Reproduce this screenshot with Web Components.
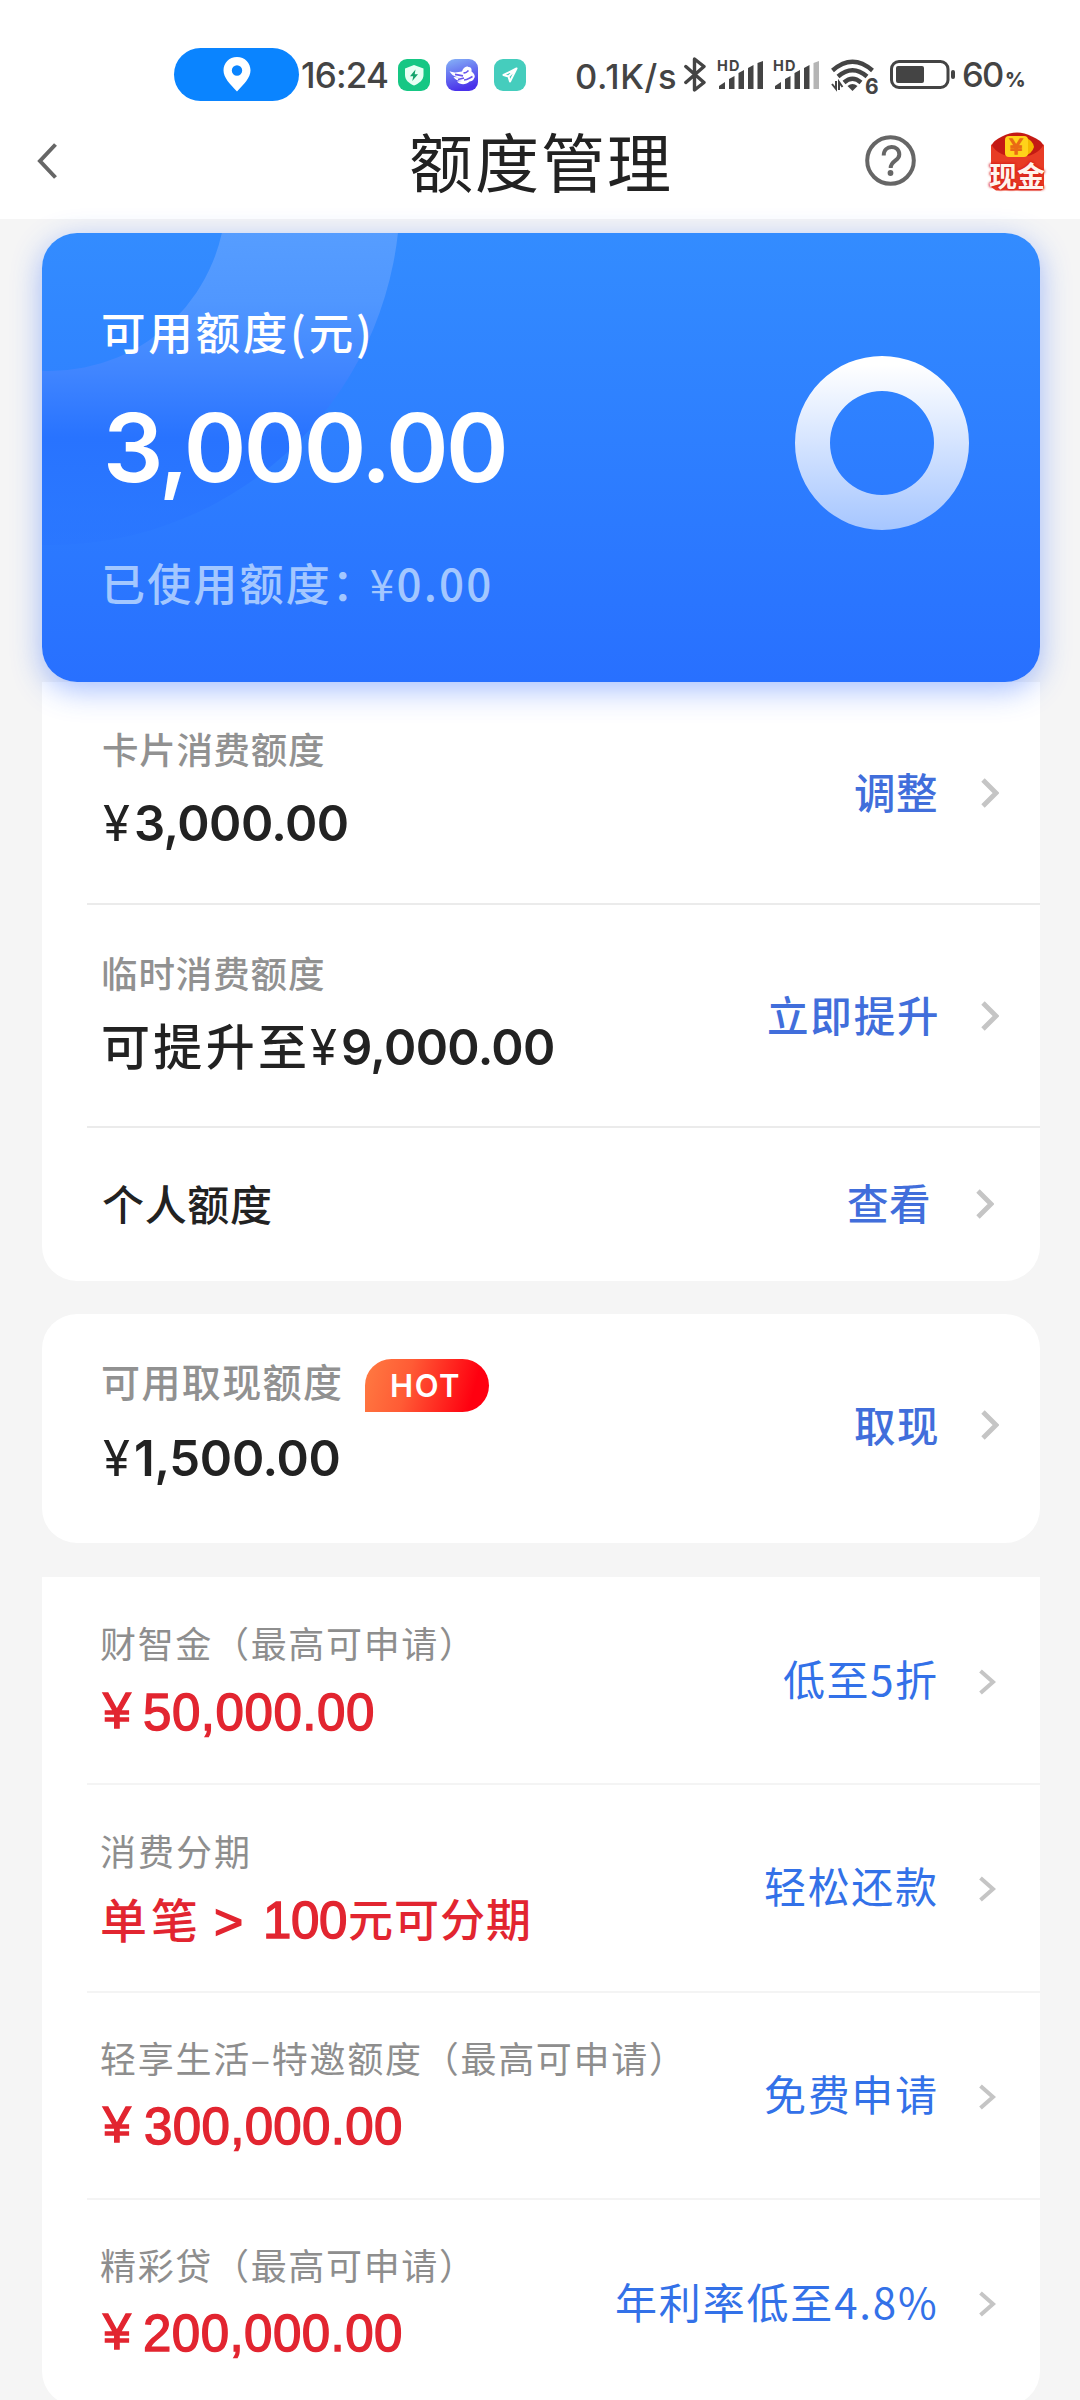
<!DOCTYPE html>
<html lang="zh-CN">
<head>
<meta charset="utf-8">
<title>额度管理</title>
<style>
html,body{margin:0;padding:0}
body{width:1080px;height:2400px;overflow:hidden;background:#f5f5f5;font-family:"Noto Sans CJK SC",sans-serif;color:#222}
</style>
</head>
<body>
<limit-page></limit-page>

<template id="tpl-page">
<style>
:host{display:block;width:1080px;height:2400px;overflow:hidden;background:#f5f5f5}
main{padding:14px 40px 0 42px}
.sum{display:flex;gap:15px;margin-left:1px}
.yen{font-weight:400;letter-spacing:4px}
</style>
<status-bar></status-bar>
<nav-bar></nav-bar>
<main>
<limit-hero></limit-hero>
<limit-group style="--h:599px;--r:0 0 35px 35px">
  <limit-row style="--h:221px" lt="50" gap="37" ac="111">
    <ink-text slot="label" w="221" size="36.5" weight="500" color="#919191">卡片消费额度</ink-text>
    <ink-text slot="value" w="240" size="49" weight="600" font="num"><span class="yen">¥</span>3,000.00</ink-text>
    <ink-text slot="action" w="82" size="41.5" weight="500" color="#416edb">调整</ink-text>
  </limit-row>
  <limit-row style="--h:223px" line="#ebebeb" lt="53" gap="31" ac="113">
    <ink-text slot="label" w="221" size="36.5" weight="500" color="#919191">临时消费额度</ink-text>
    <span slot="value" style="display:flex;align-items:flex-start;gap:5px"><ink-text w="202" size="49" weight="500">可提升至</ink-text><ink-text style="margin-top:5px" w="239" size="49" weight="600" font="num"><span class="yen">¥</span>9,000.00</ink-text></span>
    <ink-text slot="action" w="168" size="41.5" weight="500" color="#416edb">立即提升</ink-text>
  </limit-row>
  <limit-row style="--h:155px;--end:46px;--agap:47px" line="#ebebeb" lt="58" gap="0" ac="78">
    <ink-text slot="label" w="168" size="42" weight="500">个人额度</ink-text>
    <ink-text slot="action" w="81" size="41.5" weight="500" color="#416edb">查看</ink-text>
  </limit-row>
</limit-group>
<limit-group style="--h:229px;--r:35px;margin-top:33px">
  <limit-row style="--h:229px" lt="49" gap="40" ac="111">
    <span slot="label" style="display:flex;height:37px;gap:24px"><ink-text w="238" size="39" weight="500" color="#919191">可用取现额度</ink-text><hot-badge></hot-badge></span>
    <ink-text slot="value" w="232" size="49" weight="600" font="num"><span class="yen">¥</span>1,500.00</ink-text>
    <ink-text slot="action" style="margin-top:5px" w="82" size="41.5" weight="500" color="#416edb">取现</ink-text>
  </limit-row>
</limit-group>
<limit-group style="--h:829px;--r:0 0 35px 35px;margin-top:34px;--pl:59px;--end:44px;--agap:43px;--cw:17px">
  <limit-row style="--h:206px" lt="49" gap="31" ac="105">
    <ink-text slot="label" w="349" size="36" color="#8e8e8e">财智金（最高可申请）</ink-text>
    <span slot="value" class="sum"><ink-text w="28" size="50" font="red" color="#e22530">¥</ink-text><ink-text w="228" size="51" font="red" color="#e22530">50,000.00</ink-text></span>
    <ink-text slot="action" style="margin-bottom:3px" w="153" size="42" color="#3371e8">低至5折</ink-text>
  </limit-row>
  <limit-row style="--h:208px" line="#f4f4f4" lt="51" gap="27" ac="106">
    <ink-text slot="label" w="147" size="36" color="#8e8e8e">消费分期</ink-text>
    <span slot="value" style="display:flex;align-items:center;margin-left:1px"><ink-text w="94" size="47" weight="500" color="#e22530">单笔</ink-text><ink-text style="margin:5px 22px 0 20px" w="28" size="50" font="red" color="#e22530">&gt;</ink-text><ink-text w="80" size="51" font="red" color="#e22530">100</ink-text><ink-text style="margin-left:3px" w="179" size="45" weight="500" color="#e22530">元可分期</ink-text></span>
    <ink-text slot="action" style="margin-bottom:3px" w="171" size="42" color="#3371e8">轻松还款</ink-text>
  </limit-row>
  <limit-row style="--h:207px" line="#f4f4f4" lt="50" gap="30" ac="106">
    <ink-text slot="label" w="559" size="36" color="#8e8e8e">轻享生活–特邀额度（最高可申请）</ink-text>
    <span slot="value" class="sum"><ink-text w="28" size="50" font="red" color="#e22530">¥</ink-text><ink-text w="256" size="51" font="red" color="#e22530">300,000.00</ink-text></span>
    <ink-text slot="action" style="margin-bottom:3px" w="171" size="42" color="#3371e8">免费申请</ink-text>
  </limit-row>
  <limit-row style="--h:208px" line="#f4f4f4" lt="50" gap="30" ac="106">
    <ink-text slot="label" w="349" size="36" color="#8e8e8e">精彩贷（最高可申请）</ink-text>
    <span slot="value" class="sum"><ink-text w="28" size="50" font="red" color="#e22530">¥</ink-text><ink-text w="256" size="51" font="red" color="#e22530">200,000.00</ink-text></span>
    <ink-text slot="action" style="margin-bottom:4px" w="319" size="42" color="#3371e8">年利率低至4.8%</ink-text>
  </limit-row>
</limit-group>
</main>
</template>

<template id="tpl-status">
<style>
:host{display:flex;height:101px;box-sizing:border-box;padding:48px 58px 0 174px;background:#fff;align-items:flex-start}
svg{display:block;flex:none}
.pill{width:126px;height:53px;border-radius:27px;background:#0a84ff;display:flex;justify-content:center}
.pill svg{margin-top:9px}
.sig{display:grid}
.sig>*{grid-area:1/1}
</style>
<div class="pill"><svg width="28" height="35" viewBox="0 0 28 35"><path fill="#fff" fill-rule="evenodd" d="M14 0C6 0 .5 6 .5 13.300C.5 21 7 27 14 34.500C21 27 27.500 21 27.500 13.300C27.500 6 22 0 14 0ZM14 8.300a5.200 5.200 0 1 1 0 10.400a5.200 5.200 0 1 1 0-10.400Z"/></svg></div>
<ink-text style="margin:14px 0 0 3px" w="86" size="35" weight="500" font="num" color="#444">16:24</ink-text>
<svg style="margin:11px 0 0 10px" width="32" height="32" viewBox="0 0 32 32"><rect width="32" height="32" rx="9" fill="#16c784"/><path fill="#e8fff4" d="M16 6L25.500 9.500V16C25.500 21 21 24.500 16 26.500C11 24.500 7 21 7 16V9.500Z"/><path fill="#13a36b" d="M17.500 10.500L12 17.200H15.200L14.300 22L20 15.200H16.700Z"/></svg>
<svg style="margin:11px 0 0 16px" width="32" height="32" viewBox="0 0 32 32"><defs><linearGradient id="g" x1="0" y1="0" x2=".3" y2="1"><stop offset="0" stop-color="#86b4f7"/><stop offset="1" stop-color="#4a32ea"/></linearGradient></defs><rect width="32" height="32" rx="9" fill="url(#g)"/><path fill="#fff" d="M3.500 12C8 14.500 12 13 16 12.500C17 9 20 6.500 22.500 8C25 8 26 10 25.500 12.500C29 15 29.500 18 28 19.500C27.500 21.500 25 22.500 23.500 22.500C20 26 14 26 11 22.500L16 22C12 22 9 20.500 7.500 18L14.500 18.500C9.500 18 5.500 16.500 3.500 12Z"/><path fill="none" stroke="#6956ed" stroke-width="1.700" d="M17.500 13.500C19 15 21 13 22.500 11.500M18 21C21 21 23.500 19 26.500 17.500M9 15.300L17 16.800M12 20.500L18 19"/></svg>
<svg style="margin:11px 0 0 16px" width="32" height="32" viewBox="0 0 32 32"><rect width="32" height="32" rx="9" fill="#45cdbd"/><path fill="none" stroke="#fff" stroke-width="2" stroke-linejoin="round" d="M22.500 9.500L9.500 16L14.500 17.500L16 22.500Z M22.500 9.500L14.500 17.500"/></svg>
<ink-text style="margin:14px 0 0 50px" w="99" size="34.500" weight="500" font="num" color="#444">0.1K/s</ink-text>
<svg style="margin:9px 0 0 9px" width="22" height="35" viewBox="0 0 22 35"><path fill="none" stroke="#444" stroke-width="3.400" stroke-linejoin="round" stroke-linecap="round" d="M1.800 9.500L20 25.500L10.500 33V2L20 9.500L1.800 25.500"/></svg>
<div class="sig" style="margin:11px 0 0 11px;width:47px">
<ink-text style="margin-top:1px" w="22" size="14.500" weight="700" font="num" color="#444">HD</ink-text>
<svg width="47" height="31" viewBox="0 0 47 31"><path fill="#444" d="M2 30V27L8 23V30ZM12 30V20L17.500 17V30ZM21.500 30V14L27 11V30ZM31 30V9L36.500 6V30ZM40.500 30V4L46 2V30Z"/></svg></div>
<div class="sig" style="margin:11px 0 0 9px;width:47px">
<ink-text style="margin-top:1px" w="22" size="14.500" weight="700" font="num" color="#444">HD</ink-text>
<svg width="47" height="31" viewBox="0 0 47 31"><path fill="#444" d="M2 30V27L8 23V30ZM12 30V20L17.500 17V30ZM21.500 30V14L27 11V30ZM31 30V9L36.500 6V30Z"/><path fill="#b5b5b5" d="M40.500 30V4L46 2V30Z"/></svg></div>
<div class="sig" style="margin:10px 0 0 11px;width:46px">
<svg width="46" height="36" viewBox="0 0 46 36"><g fill="none" stroke="#444" stroke-width="4.400"><path d="M1.500 12.500Q21.500-5 41.500 12.500"/><path d="M7 18.500Q21.500 6 36 18.500"/><path d="M13 24.500Q21.500 17 30 24.500"/></g><path fill="#444" d="M16.500 28Q21.500 24 26.500 28L21.500 33Z"/><path stroke="#444" stroke-width="2" fill="none" d="M1 26L5 31V23M11.500 29L8 24V32"/></svg>
<ink-text style="margin:20px 0 0 34px" w="11" size="21" weight="700" font="num" color="#444">6</ink-text></div>
<svg style="margin:12px 0 0 13px" width="66" height="29" viewBox="0 0 66 29"><rect x="1.500" y="1.500" width="56.500" height="26" rx="7.500" fill="none" stroke="#444" stroke-width="3"/><rect x="6" y="6" width="28" height="17" rx="2" fill="#444"/><rect x="61" y="10" width="4" height="9" rx="2" fill="#444"/></svg>
<ink-text style="margin:14px 0 0 7px" w="40" size="34.500" weight="500" font="num" color="#444">60</ink-text>
<ink-text style="margin:24px 0 0 3px" w="16" size="20" weight="800" font="num" color="#444">%</ink-text>
</template>

<template id="tpl-nav">
<style>
:host{display:flex;height:118px;box-sizing:border-box;padding:31px 33px 0 37px;background:#fff;align-items:flex-start}
svg{display:block;flex:none}
.cash{display:grid;margin-left:72px;width:59px}
.cash>*{grid-area:1/1}
</style>
<svg style="margin-top:11px" width="21" height="36" viewBox="0 0 21 36"><path d="M18.500 1.500L3 18L18.500 34.500" fill="none" stroke="#666" stroke-width="4"/></svg>
<ink-text style="margin-left:353px" w="258" size="64" color="#222">额度管理</ink-text>
<svg style="margin:0 0 0 195px" width="52" height="60" viewBox="0 -3 52 60"><circle cx="26.500" cy="25.500" r="23.300" fill="none" stroke="#666" stroke-width="4"/><path d="M19.700 20.500C19.700 9 35.300 9.500 35.300 19.500C35.300 26 26.700 25.500 26.700 33" fill="none" stroke="#666" stroke-width="4"/><circle cx="26.500" cy="38" r="2.900" fill="#666"/></svg>
<div class="cash"><svg width="59" height="60" viewBox="0 0 59 60"><path fill="#c41a14" d="M3 14Q6 8 14 4.500Q29-3.500 44 4.500Q53 8 56 14V30H3Z"/><path fill="#e83c25" d="M3 12Q10 25 30 25Q49 25 56 12V56L53 58.500H8L3 55Z"/><path fill="#f5b800" d="M36 5Q45 8 46 15Q44 22 36 24Z"/><rect x="17" y="4" width="23" height="21" rx="4" fill="#ffd21a"/></svg>
<ink-text style="margin:7px 0 0 21px" w="15" size="22" font="red" color="#ea6a14">¥</ink-text>
<ink-text style="margin:30px 0 0 1px;text-shadow:0 0 2px #d8231a,0 0 3px #d8231a,0 0 3px #d8231a" w="56" size="28" weight="700" color="#fff4ec">现金</ink-text></div>
</template>

<template id="tpl-hero">
<style>
:host{display:flex;position:relative;z-index:1;width:998px;height:449px;box-sizing:border-box;padding:78px 71px 0 61px;border-radius:35px;background:linear-gradient(#338cff,#2870ff);box-shadow:0 8px 30px rgba(40,100,255,.42);justify-content:space-between}
.bg{position:absolute;left:0;top:0;border-radius:35px}
.col{position:relative}
.ring{position:relative;margin-top:45px}
</style>
<svg class="bg" width="998" height="449" viewBox="0 0 998 449"><defs><linearGradient id="a" gradientUnits="userSpaceOnUse" x1="0" y1="0" x2="0" y2="310"><stop offset="0" stop-color="#569dff"/><stop offset=".22" stop-color="#5097ff"/><stop offset=".45" stop-color="#4085ff"/><stop offset=".66" stop-color="#2873ff"/><stop offset="1" stop-color="#2873ff" stop-opacity=".35"/></linearGradient></defs><path fill="url(#a)" fill-rule="evenodd" d="M8-388A350 350 0 0 1 8 312A350 350 0 0 1 8-388ZM8-214A176 176 0 0 0 8 138A176 176 0 0 0 8-214Z"/></svg>
<div class="col">
<ink-text w="265" size="44.500" weight="500" color="#fff">可用额度(元)</ink-text>
<ink-text style="margin-top:53px;margin-left:4px" w="397" size="95" weight="600" font="num" color="#fff">3,000.00</ink-text>
<ink-text style="margin:62px 0 0 2px" w="393" size="44" weight="500" color="#a3c7ff">已使用额度<span style="letter-spacing:-6px">：</span><span style="font-weight:400">¥</span>0.00</ink-text>
</div>
<svg class="ring" width="174" height="174" viewBox="0 0 174 174"><defs><linearGradient id="r" x1="0" y1="0" x2="0" y2="1"><stop offset=".05" stop-color="#fff"/><stop offset="1" stop-color="#a6c6ff"/></linearGradient></defs><path fill="url(#r)" fill-rule="evenodd" d="M87 0A87 87 0 0 1 87 174A87 87 0 0 1 87 0ZM87 35A52 52 0 0 0 87 139A52 52 0 0 0 87 35Z"/></svg>
</template>

<template id="tpl-group">
<style>:host{display:block;background:#fff;height:var(--h);border-radius:var(--r);overflow:hidden}</style>
<slot></slot>
</template>

<template id="tpl-row">
<style>
:host{display:flex;flex-direction:column;height:var(--h);box-sizing:border-box}
.line{height:2px;margin:0 0 -2px 45px;flex:none}
.row{display:flex;justify-content:space-between;padding:0 var(--end,41px) 0 var(--pl,61px)}
.act{display:flex;align-items:center;height:60px;gap:var(--agap,44px)}
svg{display:block}
</style>
<div class="line"></div>
<div class="row"><div class="txt"><slot name="label"></slot><div class="gap"></div><slot name="value"></slot></div>
<div class="act"><slot name="action"></slot><svg width="18" height="30" viewBox="0 0 18 30"><path fill="none" stroke="#c5c5c5" stroke-width="4.800" d="M2 2L15 15L2 28"/></svg></div></div>
</template>

<template id="tpl-badge">
<style>
:host{display:flex;width:124px;height:53px;margin-top:-4px;box-sizing:border-box;padding:15px 0 0 27px;border-radius:27px 27px 27px 0;background:linear-gradient(105deg,#ff7b42,#ff5b35 35%,#ff0010 85%)}
</style>
<ink-text w="67" size="31" weight="600" font="num" color="#fff">HOT</ink-text>
</template>

<script>
const clone = id => document.getElementById(id).content.cloneNode(true);
const FONTS = {
  cjk: '"Noto Sans CJK SC", sans-serif',
  num: 'Inter, "Noto Sans CJK SC", sans-serif',
  red: '"Liberation Sans", "Noto Sans CJK SC", sans-serif'
};
const ctx = document.createElement('canvas').getContext('2d');

// A line of text whose box is the visible extent of its glyphs, tracked to a given width.
class InkText extends HTMLElement {
  connectedCallback() {
    if (this.shadowRoot) return;
    const root = this.attachShadow({ mode: 'open' });
    const text = this.textContent;
    const size = +this.getAttribute('size');
    const weight = this.getAttribute('weight') || 400;
    const key = this.getAttribute('font') || 'cjk';
    const w = +this.getAttribute('w');
    ctx.font = `${weight} ${size}px ${FONTS[key]}`;
    const m = ctx.measureText(text);
    const left = -m.actualBoundingBoxLeft;
    const ink = m.actualBoundingBoxRight + m.actualBoundingBoxLeft;
    const n = [...text].length;
    const ls = n > 1 ? (w - ink) / (n - 1) : 0;
    const h = m.actualBoundingBoxAscent + m.actualBoundingBoxDescent;
    const A = m.fontBoundingBoxAscent, D = m.fontBoundingBoxDescent;
    const top = m.actualBoundingBoxAscent - ((h - A - D) / 2 + A);
    const color = this.getAttribute('color') || '#222';
    const stroke = key === 'red' ? '-webkit-text-stroke:1.4px currentColor;' : '';
    root.innerHTML = `<style>:host{display:flow-root;flex:none;width:${w}px;height:${h}px;color:${color}}
div{white-space:nowrap;font:${weight} ${size}px/${h}px ${FONTS[key]};letter-spacing:${ls}px;margin:${top}px 0 0 ${-left}px;${stroke}}</style><div><slot></slot></div>`;
  }
}
const simple = id => class extends HTMLElement {
  connectedCallback() {
    if (!this.shadowRoot) this.attachShadow({ mode: 'open' }).append(clone(id));
  }
};
class LimitRow extends HTMLElement {
  connectedCallback() {
    if (this.shadowRoot) return;
    const r = this.attachShadow({ mode: 'open' });
    r.append(clone('tpl-row'));
    r.querySelector('.line').style.background = this.getAttribute('line') || 'transparent';
    r.querySelector('.txt').style.paddingTop = this.getAttribute('lt') + 'px';
    r.querySelector('.gap').style.height = this.getAttribute('gap') + 'px';
    r.querySelector('.act').style.marginTop = (this.getAttribute('ac') - 30) + 'px';
    if (getComputedStyle(this).getPropertyValue('--cw').trim()) {
      const s = r.querySelector('svg');
      s.setAttribute('width', 17); s.setAttribute('height', 26);
      s.setAttribute('viewBox', '0 0 17 26');
      s.firstElementChild.setAttribute('d', 'M1.500 2L14 13L1.500 24');
      s.firstElementChild.setAttribute('stroke-width', '4');
    }
  }
}
customElements.define('ink-text', InkText);
customElements.define('hot-badge', simple('tpl-badge'));
customElements.define('status-bar', simple('tpl-status'));
customElements.define('nav-bar', simple('tpl-nav'));
customElements.define('limit-hero', simple('tpl-hero'));
customElements.define('limit-group', simple('tpl-group'));
customElements.define('limit-row', LimitRow);
customElements.define('limit-page', simple('tpl-page'));
</script>
</body>
</html>
